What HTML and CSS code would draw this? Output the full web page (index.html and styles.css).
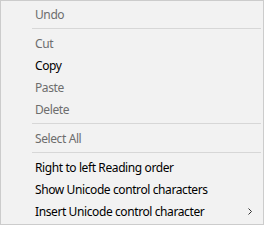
FILE: index.html
```html
<!DOCTYPE html>
<html lang="en">
<head>
    <meta charset="UTF-8">
    <title>Context menu</title>
    <link rel="stylesheet" href="styles.css">
</head>
<body>
    <div class="menu">
        <div class="item disabled">Undo</div>
        <div class="separator"></div>
        <div class="item disabled">Cut</div>
        <div class="item">Copy</div>
        <div class="item disabled">Paste</div>
        <div class="item disabled">Delete</div>
        <div class="separator"></div>
        <div class="item disabled">Select All</div>
        <div class="separator"></div>
        <div class="item">Right to left Reading order</div>
        <div class="item">Show Unicode control characters</div>
        <div class="item submenu">
            <span>Insert Unicode control character</span>
            <svg class="arrow" width="4" height="7" viewBox="0 0 4 7">
                <path d="M0.5 0.5 L3.5 3.5 L0.5 6.5" fill="none" stroke="#333" stroke-width="1"/>
            </svg>
        </div>
    </div>
</body>
</html>
```

FILE: styles.css
```css
body {
    margin: 0;
    font-family: "Noto Sans", sans-serif;
    font-size: 12px;
    letter-spacing: -0.4px;
}
.menu {
    box-sizing: border-box;
    width: 264px;
    height: 225px;
    background-color: #f2f2f2;
    border: 1px solid #cccccc;
    padding: 2px;
    display: flex;
    flex-direction: column;
}
.item {
    height: 22px;
    display: flex;
    align-items: center;
    padding-left: 32px;
    color: #000000;
}
.item.disabled {
    color: #6d6d6d;
}
.submenu {
    justify-content: space-between;
    padding-right: 9px;
}
.separator {
    height: 1px;
    margin: 3px 0 3px 29px;
    background-color: #d7d7d7;
}
```
